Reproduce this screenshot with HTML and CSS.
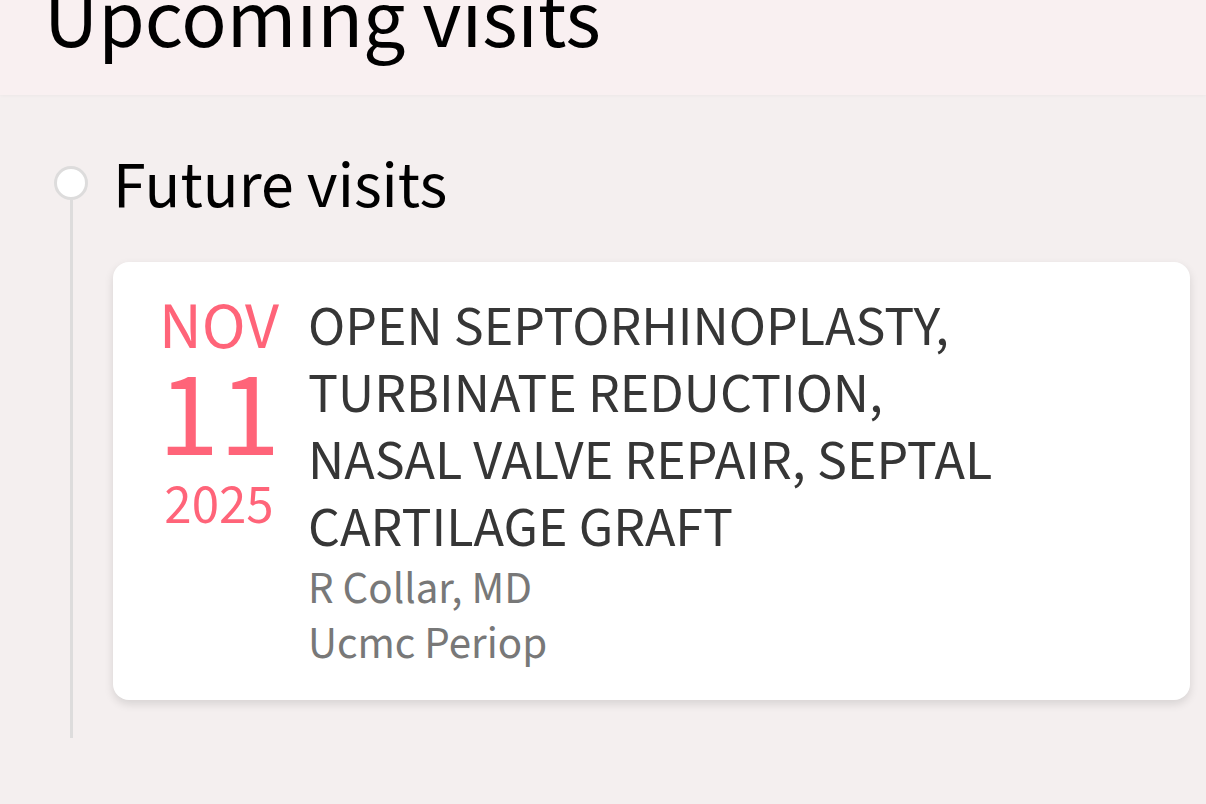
FILE: index.html
```html
<!DOCTYPE html>
<html lang="en">
<head>
    <meta charset="UTF-8">
    <meta name="viewport" content="width=device-width, initial-scale=1.0">
    <title>Upcoming visits</title>
    <link rel="stylesheet" href="styles.css">
</head>
<body>
    <header class="page-header">
        <h1>Upcoming visits</h1>
    </header>

    <section class="timeline">
        <div class="rail">
            <span class="rail-dot"></span>
            <span class="rail-line"></span>
        </div>
        <div class="timeline-content">
            <h2>Future visits</h2>
            <div class="visit-card">
                <div class="visit-date">
                    <span class="month">NOV</span>
                    <span class="day">11</span>
                    <span class="year">2025</span>
                </div>
                <div class="visit-info">
                    <p class="visit-title">OPEN SEPTORHINOPLASTY, TURBINATE REDUCTION, NASAL VALVE REPAIR, SEPTAL CARTILAGE GRAFT</p>
                    <p class="visit-meta">R Collar, MD</p>
                    <p class="visit-meta">Ucmc Periop</p>
                </div>
            </div>
        </div>
    </section>
</body>
</html>
```

FILE: styles.css
```css
/* Page base */
html, body {
    margin: 0;
    padding: 0;
    height: 100%;
    background: #f4efef;
    font-family: "Source Sans 3", "Lato", sans-serif;
    color: #000;
    overflow: hidden;
}

/* Header strip */
.page-header {
    height: 95px;
    background: #f9f0f1;
    box-shadow: 0 1px 3px rgba(0, 0, 0, 0.03);
    padding-left: 44px;
    overflow: hidden;
}

.page-header h1 {
    margin: -29px 0 0;
    font-size: 84px;
    font-weight: 400;
    line-height: 100px;
}

/* Timeline */
.timeline {
    display: flex;
    gap: 25px;
    padding: 51px 16px 0 54px;
}

.rail {
    display: flex;
    flex-direction: column;
    align-items: center;
    width: 34px;
    padding-top: 20px;
}

.rail-dot {
    flex: none;
    width: 28px;
    height: 28px;
    border: 3px solid #dddcdc;
    border-radius: 50%;
    background: #fff;
}

.rail-line {
    flex: 1;
    width: 3px;
    background: #dddcdc;
}

.timeline-content {
    flex: 1;
    padding-bottom: 38px;
}

.timeline-content h2 {
    margin: 0 0 36px;
    font-size: 66px;
    font-weight: 400;
    line-height: 80px;
}

/* Visit card */
.visit-card {
    display: flex;
    gap: 30px;
    background: #fff;
    border-radius: 16px;
    box-shadow: 0 4px 10px rgba(0, 0, 0, 0.12);
    padding: 31px 47px 28px 47px;
}

.visit-date {
    display: flex;
    flex-direction: column;
    align-items: center;
    width: 118px;
    color: #ff6479;
}

.visit-date .month {
    font-size: 66px;
    line-height: 68px;
}

.visit-date .day {
    font-size: 123px;
    line-height: 111px;
}

.visit-date .year {
    font-size: 55px;
    line-height: 68px;
}

.visit-info {
    flex: 1;
    max-width: 720px;
    padding-top: 1px;
}

.visit-info p {
    margin: 0;
}

.visit-title {
    font-size: 56px;
    line-height: 67px;
    color: #363636;
}

.visit-meta {
    font-size: 45px;
    line-height: 55px;
    color: #787878;
}
```
